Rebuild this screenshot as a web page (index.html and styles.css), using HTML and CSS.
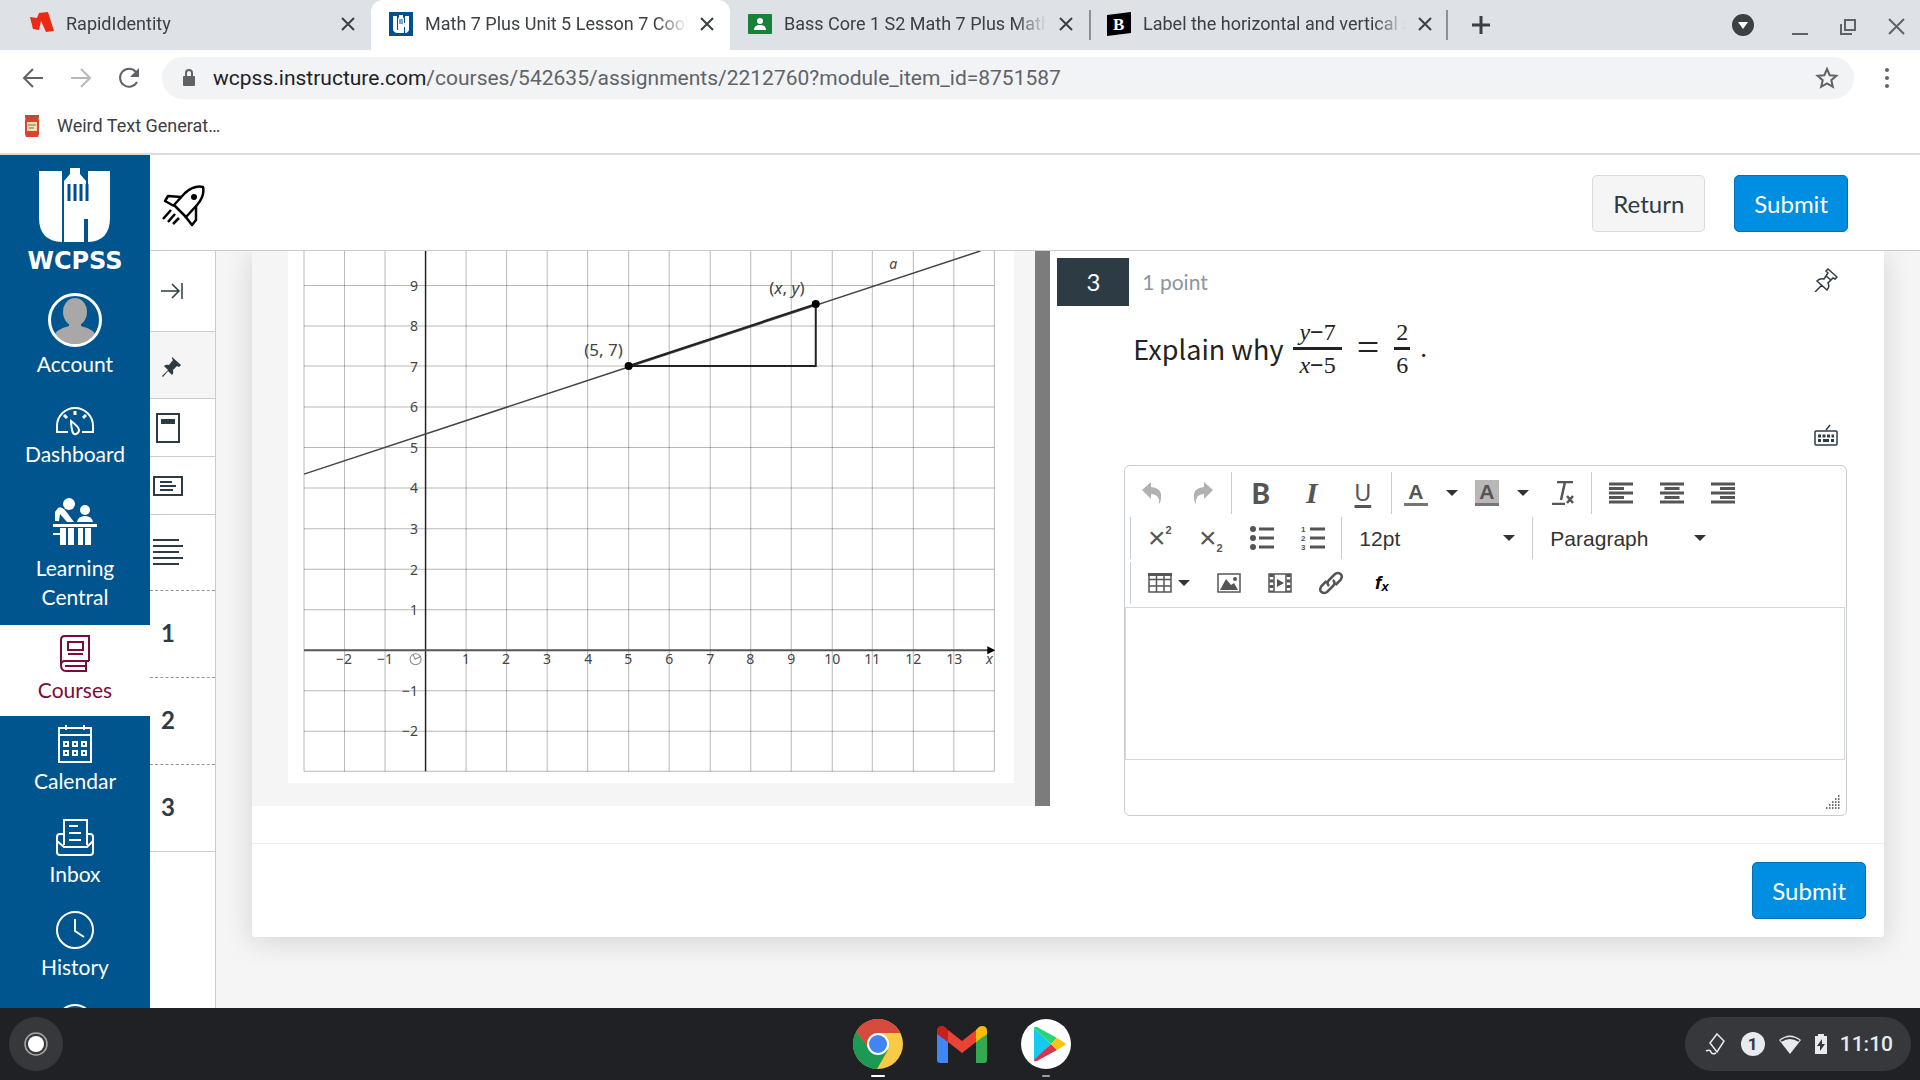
FILE: index.html
```
<!DOCTYPE html>
<html lang="en">
<head>
<meta charset="UTF-8">
<meta name="viewport" content="width=device-width, initial-scale=1.0">
<title>Math 7 Plus Unit 5 Lesson 7 Cool Down</title>
<link rel="stylesheet" href="styles.css">
</head>
<body>

<!-- Browser tabs -->
<div class="tab-strip">
    <div class="tab">
        <svg class="favicon" viewBox="0 0 24 24"><path d="M0 5l7 1 2-5 9-1 6 19-8 1-5-11-2 9-6-1z" fill="#ea2a12"/></svg>
        <span class="tab-title">RapidIdentity</span>
        <button class="tab-close" aria-label="Close tab"><svg viewBox="0 0 14 14"><path d="M1 1l12 12M13 1L1 13"/></svg></button>
    </div>
    <div class="tab active">
        <svg class="favicon" viewBox="0 0 24 24"><path d="M0 0h24v24H0z" fill="#00508f"/><path d="M4 4h4v14h1V7l1-2V3h4v2l1 2v4h1V4h4v14q-1 3-4 3v-6h-1v6H8q-4-1-4-4z" fill="#fff"/><path d="M11 7v5M13 7v5" stroke="#00508f"/></svg>
        <span class="tab-title">Math 7 Plus Unit 5 Lesson 7 Cool</span>
        <button class="tab-close" aria-label="Close tab"><svg viewBox="0 0 14 14"><path d="M1 1l12 12M13 1L1 13"/></svg></button>
    </div>
    <div class="tab">
        <svg class="favicon" viewBox="0 0 24 24"><rect y="2" width="24" height="20" rx="1" fill="#188038"/><circle cx="12" cy="9" r="3" fill="#fff"/><path d="M6 18q0-5 6-5t6 5z" fill="#fff"/></svg>
        <span class="tab-title">Bass Core 1 S2 Math 7 Plus Math</span>
        <button class="tab-close" aria-label="Close tab"><svg viewBox="0 0 14 14"><path d="M1 1l12 12M13 1L1 13"/></svg></button>
    </div>
    <div class="tab divided">
        <svg class="favicon" viewBox="0 0 24 24"><path d="M0 3l24-3v21L0 24z" fill="#000"/><text x="6" y="18" class="favicon-letter">B</text></svg>
        <span class="tab-title">Label the horizontal and vertical s</span>
        <button class="tab-close" aria-label="Close tab"><svg viewBox="0 0 14 14"><path d="M1 1l12 12M13 1L1 13"/></svg></button>
    </div>
    <button class="new-tab" aria-label="New tab"><svg viewBox="0 0 18 18"><path d="M9 0v18M0 9h18"/></svg></button>
    <div class="window-buttons">
        <button aria-label="Search tabs"><svg viewBox="0 0 24 24"><circle cx="12" cy="12" r="11" fill="#3c4043"/><path d="M7 9h10l-5 7z" fill="#fff"/></svg></button>
        <button aria-label="Minimize"><svg viewBox="0 0 24 24"><path d="M4 21h16" class="line"/></svg></button>
        <button aria-label="Restore"><svg viewBox="0 0 24 24"><path d="M9 7h10v10H9zM5 11v10h11" class="line"/></svg></button>
        <button aria-label="Close"><svg viewBox="0 0 24 24"><path d="M5 6l15 15M20 6L5 21" class="line"/></svg></button>
    </div>
</div>

<!-- Address bar -->
<div class="toolbar">
    <button class="nav-button" aria-label="Back"><svg viewBox="0 0 24 24"><path d="M22 12H3M12 3l-9 9 9 9"/></svg></button>
    <button class="nav-button disabled" aria-label="Forward"><svg viewBox="0 0 24 24"><path d="M2 12h19M12 3l9 9-9 9"/></svg></button>
    <button class="nav-button" aria-label="Reload"><svg viewBox="0 0 24 24"><path d="M20 16a9 9 0 1 1-1-10"/><path d="M22 2v9h-9z" fill="#5f6368" stroke="none"/></svg></button>
    <div class="omnibox">
        <svg class="lock" viewBox="0 0 14 18"><rect x="1" y="7" width="12" height="10" rx="1" fill="#5f6368"/><path d="M4 7V4a3 3 0 0 1 6 0v3" fill="none" stroke="#5f6368" stroke-width="2"/></svg>
        <span class="url"><b>wcpss.instructure.com</b>/courses/542635/assignments/2212760?module_item_id=8751587</span>
        <button class="star" aria-label="Bookmark this tab"><svg viewBox="0 0 24 24"><path d="M12 3l2.700 6.200 6.700.6-5.100 4.400 1.500 6.600-5.800-3.500-5.800 3.500 1.500-6.600-5.100-4.400 6.700-.6z"/></svg></button>
    </div>
    <button class="menu" aria-label="Menu"><svg viewBox="0 0 24 24"><circle cx="12" cy="4" r="2"/><circle cx="12" cy="12" r="2"/><circle cx="12" cy="20" r="2"/></svg></button>
</div>

<div class="bookmarks">
    <a class="bookmark" href="#">
        <svg viewBox="0 0 16 24"><path d="M2 3h12l1 3v14l-1 3H2l-1-3V6z" fill="#d9432f"/><path d="M1 1h14v3H1z" fill="#a8563c"/><rect x="3" y="8" width="10" height="9" fill="#f4e3b4"/><path d="M4 11h8M5 14h5" stroke="#7d6648"/></svg>
        <span>Weird Text Generat…</span>
    </a>
</div>

<div class="page">
    <!-- Global navigation -->
    <nav class="global-nav">
        <a class="logo" href="#" aria-label="WCPSS">
            <svg viewBox="0 0 96 104">
                <path d="M12 4h23v71Q12 74 12 51zM37 75V14l6-7V1h10v6l6 7v20h2V4h22v47q0 23-22 24V52h-4v23z" fill="#fff"/>
                <path d="M42 17v17M48 17v17M54 17v17M60 17v17" stroke="#00508f" stroke-width="3"/>
                <text x="48" y="102" class="logo-text">WCPSS</text>
            </svg>
        </a>
        <a class="nav-item account" href="#">
            <svg viewBox="0 0 54 54"><clipPath id="face"><circle cx="27" cy="27" r="24"/></clipPath><g clip-path="url(#face)" fill="#a9a7a7"><ellipse cx="27" cy="19" rx="12" ry="14"/><path d="M21 28h12v5q14 3 17 13v8H4v-8q3-10 17-13z"/></g><circle cx="27" cy="27" r="25.500" fill="none" stroke="#fff" stroke-width="3"/></svg>
            <span>Account</span>
        </a>
        <a class="nav-item" href="#">
            <svg viewBox="0 0 40 40"><g class="stroke"><path d="M13 35H2v-6a18 18 0 0 1 36 0v6H27"/><path d="M16 24q8 6 8 9t-3 4-4-4-1-9z"/></g><path d="M9 18l3 3M31 18l-3 3M20 14v4" stroke="currentColor" stroke-width="3"/></svg>
            <span>Dashboard</span>
        </a>
        <a class="nav-item learning" href="#">
            <svg viewBox="0 0 44 61"><g fill="currentColor"><ellipse cx="16" cy="14" rx="6" ry="6"/><circle cx="32" cy="20" r="5"/><path d="M24 32q1-6 8-6t8 6zM5 18q3-2 7 2l9 12h-7L7 24l-1 7H2V22z"/><path d="M0 34h44v3H0zM7 38h6v17H7zM15 38h6v17h-6zM25 38h5v17h-5zM32 38h6v17h-6zM0 43h8v2H0z"/></g></svg>
            <span>Learning Central</span>
        </a>
        <a class="nav-item current" href="#">
            <svg viewBox="0 0 40 40"><g class="stroke"><path d="M34 28V3H10q-4 0-4 4v25q0 6 5 6h21M34 28H10q-4 0-4 4M31 28v10M13 9h15v8H13zM13 21h15M10 33h21"/></g></svg>
            <span>Courses</span>
        </a>
        <a class="nav-item" href="#">
            <svg viewBox="0 0 40 40"><g class="stroke"><path d="M4 4h32v34H4zM4 11h32M11 1v5M29 1v5"/><path d="M9 18h4v4H9zM18 18h4v4h-4zM27 18h4v4h-4zM9 27h4v4H9zM18 27h4v4h-4zM27 27h4v4h-4z"/></g></svg>
            <span>Calendar</span>
        </a>
        <a class="nav-item" href="#">
            <svg viewBox="0 0 40 40"><g class="stroke"><path d="M9 28V3h23v25M9 17H5q-3 0-3 3v15q0 3 3 3h30q3 0 3-3V20q0-3-3-3h-3M2 24l7 6h23l6-6M14 9h9M14 16h12M14 23h12"/></g></svg>
            <span>Inbox</span>
        </a>
        <a class="nav-item" href="#">
            <svg viewBox="0 0 40 40"><g class="stroke"><circle cx="20" cy="20" r="18"/><path d="M20 9v12l9 6"/></g></svg>
            <span>History</span>
        </a>
        <a class="nav-item" href="#" aria-label="Help">
            <svg viewBox="0 0 40 40"><g class="stroke"><circle cx="20" cy="20" r="18"/></g></svg>
        </a>
    </nav>

    <div class="main">
        <header class="assignment-header">
            <svg class="rocket" viewBox="0 0 44 44"><g fill="none" stroke="#000" stroke-width="2.500" stroke-linejoin="round"><path d="M12 21L23 9Q32 1 41 3q2 9-6 18L24 33z"/><path d="M19 13L6 12l-3 5 9 5M34 22v14l-4 5-7-9"/><path d="M9 26l-8 9M13 30l-7 8M17 34l-6 6"/></g><circle cx="32" cy="13" r="3"/></svg>
            <div class="header-actions">
                <button class="btn">Return</button>
                <button class="btn primary">Submit</button>
            </div>
        </header>

        <div class="workspace">
            <!-- Question rail -->
            <aside class="rail">
                <button class="rail-toggle" aria-label="Collapse"><svg viewBox="0 0 24 18"><path d="M1 9h18M12 2l7 7-7 7M22 1v16" fill="none" stroke="#2d3b45" stroke-width="1.500"/></svg></button>
                <button class="rail-pin" aria-label="Pinned"><svg viewBox="0 0 24 24"><path d="M13 3l9 8-2 2-2-1-4 4q1 3-1 5l-4-4-5 6-1-1 6-6-4-4q2-2 5-1l4-5-1-1z" fill="#2d3b45"/></svg></button>
                <button class="rail-tool" aria-label="Passage"><svg viewBox="0 0 32 32"><path d="M5 2h22v28H5z" class="rail-line"/><path d="M9 7h14v5H9z" fill="#2d3b45"/></svg></button>
                <button class="rail-tool" aria-label="Text block"><svg viewBox="0 0 32 32"><path d="M2 7h28v18H2zM8 12h12M8 16h16M8 20h13" class="rail-line"/></svg></button>
                <button class="rail-list" aria-label="Question list"><svg viewBox="0 0 32 32"><path d="M1 3h26M1 9h30M1 15h26M1 21h30M1 27h26" class="rail-line"/></svg></button>
                <a class="rail-number" href="#">1</a>
                <a class="rail-number" href="#">2</a>
                <a class="rail-number last" href="#">3</a>
            </aside>

            <main class="content">
                <section class="card">
                    <div class="split">
                        <div class="stimulus">
                            <svg class="graph" viewBox="288 251 726 532">
                                <path d="M288 251h726v532H288z" fill="#fff"/>
                                <g class="grid">
                                    <path d="M304 251V771M344.500 251V771M385 251V771M466 251V771M506.500 251V771M547 251V771M587.500 251V771M628.500 251V771M669 251V771M710 251V771M750.500 251V771M791 251V771M832 251V771M872 251V771M913 251V771M953.500 251V771M994 251V771"/>
                                    <path d="M304 285.500H994M304 326H994M304 366H994M304 407H994M304 447.500H994M304 488H994M304 528.500H994M304 569H994M304 609.500H994M304 690.500H994M304 731H994M304 771H994"/>
                                </g>
                                <g fill="none" stroke="#222">
                                    <path d="M425.500 251V771" stroke-width="1.500"/>
                                    <path d="M304 650H990" stroke="#555" stroke-width="2"/>
                                    <path d="M304 474L980 251" stroke="#444" stroke-width="1.500"/>
                                    <path d="M628.500 366L815.500 304V366z" stroke-width="2"/>
                                </g>
                                <path d="M987 646l8 4-8 4z"/>
                                <circle cx="628.500" cy="366" r="4"/>
                                <circle cx="815.500" cy="304" r="4"/>
                                <g class="tick">
                                    <text x="344" y="664">−2</text><text x="385" y="664">−1</text>
                                    <text x="466" y="664">1</text><text x="506" y="664">2</text><text x="547" y="664">3</text>
                                    <text x="588" y="664">4</text><text x="628" y="664">5</text><text x="669" y="664">6</text>
                                    <text x="710" y="664">7</text><text x="750" y="664">8</text><text x="791" y="664">9</text>
                                    <text x="832" y="664">10</text><text x="872" y="664">11</text><text x="913" y="664">12</text>
                                    <text x="954" y="664">13</text>
                                </g>
                                <g class="tick end">
                                    <text x="418" y="291">9</text><text x="418" y="331">8</text><text x="418" y="372">7</text>
                                    <text x="418" y="412">6</text><text x="418" y="453">5</text><text x="418" y="493">4</text>
                                    <text x="418" y="534">3</text><text x="418" y="575">2</text><text x="418" y="615">1</text>
                                    <text x="418" y="696">−1</text><text x="418" y="736">−2</text>
                                </g>
                                <g fill="none" stroke="#888"><circle cx="415.500" cy="659" r="5.500"/><path d="M413 654l2 5 6-3"/></g>
                                <g class="point">
                                    <text x="584" y="356">(5, 7)</text>
                                    <text x="769" y="294">(<tspan class="var">x</tspan>, <tspan class="var">y</tspan>)</text>
                                </g>
                                <g class="tick"><text x="893" y="269" class="var">a</text><text x="989" y="664" class="var">x</text></g>
                            </svg>
                        </div>
                        <div class="splitter"></div>
                        <div class="question">
                            <div class="question-head">
                                <span class="question-number">3</span>
                                <span class="points">1 point</span>
                                <button class="icon-button" aria-label="Pin question"><svg viewBox="0 0 24 24"><path d="M14 1l9 8-2 2-2-1-5 5q2 4-1 7L3 13q3-3 7-2l4-6-2-2zM8 17l-7 7M12 8l5 4" fill="none" stroke="#2d3b45" stroke-width="1.500"/></svg></button>
                            </div>
                            <div class="prompt">
                                <span>Explain why</span>
                                <span class="fraction"><span class="top"><i>y</i><b>−</b>7</span><span><i>x</i><b>−</b>5</span></span>
                                <span class="equals">=</span>
                                <span class="fraction narrow"><span class="top">2</span><span>6</span></span>
                                <span class="dot">.</span>
                            </div>
                            <div class="keyboard-row">
                                <button class="icon-button" aria-label="Keyboard shortcuts"><svg viewBox="0 0 24 24"><rect x="1" y="8" width="22" height="14" rx="1" fill="none" stroke="#2d3b45" stroke-width="1.500"/><path d="M12 7l4-5" stroke="#2d3b45" stroke-width="1.500"/><path d="M4 13h16" stroke="#2d3b45" stroke-width="3" stroke-dasharray="3 1.500"/><path d="M4 17.500h3M9 17.500h6M17 17.500h3" stroke="#2d3b45" stroke-width="3"/></svg></button>
                            </div>

                            <!-- Rich text editor -->
                            <div class="editor">
                                <div class="editor-toolbar">
                                    <div class="tool-row">
                                        <div class="group first">
                                            <button class="tool faded" aria-label="Undo"><svg viewBox="0 0 24 24"><path d="M2 9l9-8v5q11 1 10 10 0 5-2 7 1-10-8-10v5z"/></svg></button>
                                            <button class="tool faded" aria-label="Redo"><svg viewBox="0 0 24 24"><path d="M22 9l-9-8v5Q2 7 3 16q0 5 2 7-1-10 8-10v5z"/></svg></button>
                                        </div>
                                        <div class="group">
                                            <button class="tool bold">B</button>
                                            <button class="tool italic">I</button>
                                            <button class="tool underline">U</button>
                                        </div>
                                        <div class="group">
                                            <button class="tool split-tool" aria-label="Text color"><span class="color-letter">A</span><svg class="caret" viewBox="0 0 12 6"><path d="M0 0h12L6 6z"/></svg></button>
                                            <button class="tool split-tool" aria-label="Background color"><span class="color-letter filled">A</span><svg class="caret" viewBox="0 0 12 6"><path d="M0 0h12L6 6z"/></svg></button>
                                            <button class="tool" aria-label="Clear formatting"><svg viewBox="0 0 24 24"><path d="M6 1h16M14 1l-4 18M1 23h13M16 15l6 7M22 15l-6 7" fill="none" stroke="#555" stroke-width="2.500"/></svg></button>
                                        </div>
                                        <div class="group">
                                            <button class="tool" aria-label="Align left"><svg viewBox="0 0 24 24"><path d="M0 3h24M0 7.500h15M0 12h24M0 16.500h15M0 21h24" class="bar"/></svg></button>
                                            <button class="tool" aria-label="Align center"><svg viewBox="0 0 24 24"><path d="M0 3h24M4.500 7.500h15M0 12h24M4.500 16.500h15M0 21h24" class="bar"/></svg></button>
                                            <button class="tool" aria-label="Align right"><svg viewBox="0 0 24 24"><path d="M0 3h24M9 7.500h15M0 12h24M9 16.500h15M0 21h24" class="bar"/></svg></button>
                                        </div>
                                    </div>
                                    <div class="tool-row">
                                        <div class="group">
                                            <button class="tool script" aria-label="Superscript">×<sup>2</sup></button>
                                            <button class="tool script" aria-label="Subscript">×<sub>2</sub></button>
                                            <button class="tool" aria-label="Bullet list"><svg viewBox="0 0 24 24"><circle cx="3" cy="3" r="3"/><circle cx="3" cy="12" r="3"/><circle cx="3" cy="21" r="3"/><path d="M9 3h15M9 12h15M9 21h15" class="bar"/></svg></button>
                                            <button class="tool" aria-label="Numbered list"><svg viewBox="0 0 24 24"><text x="0" y="6" class="digit">1</text><text x="0" y="15" class="digit">2</text><text x="0" y="24" class="digit">3</text><path d="M9 3h15M9 12h15M9 21h15" class="bar"/></svg></button>
                                        </div>
                                        <div class="group">
                                            <div class="picker">
                                                <select aria-label="Font size"><option>12pt</option></select>
                                                <svg class="caret" viewBox="0 0 12 6"><path d="M0 0h12L6 6z"/></svg>
                                            </div>
                                        </div>
                                        <div class="group">
                                            <div class="picker">
                                                <select aria-label="Block format"><option>Paragraph</option></select>
                                                <svg class="caret" viewBox="0 0 12 6"><path d="M0 0h12L6 6z"/></svg>
                                            </div>
                                        </div>
                                    </div>
                                    <div class="tool-row">
                                        <div class="group">
                                            <button class="tool table-tool" aria-label="Table"><svg viewBox="0 0 24 24"><path d="M1 3h22v18H1zM1 8.500h22M1 15h22M8.500 3v18M16 3v18" fill="none" stroke="#555" stroke-width="1.500"/><path d="M0 2h24v3H0z"/></svg><svg class="caret" viewBox="0 0 12 6"><path d="M0 0h12L6 6z"/></svg></button>
                                            <button class="tool" aria-label="Image"><svg viewBox="0 0 24 24"><path d="M1 3h22v18H1z" fill="none" stroke="#555" stroke-width="1.500"/><path d="M3 19l6-11 5 6 3-2 4 7z"/><circle cx="18" cy="8" r="2"/></svg></button>
                                            <button class="tool" aria-label="Media"><svg viewBox="0 0 24 24"><path d="M1 3h22v18H1zM6 3v18M18 3v18" fill="none" stroke="#555" stroke-width="1.500"/><path d="M9 8l7 4-7 4z"/><path d="M3.500 3v18M20.500 3v18" stroke="#555" stroke-width="4" stroke-dasharray="3 2.500"/></svg></button>
                                            <button class="tool" aria-label="Link"><svg viewBox="0 0 24 24"><path d="M10 15q-3-3 0-6l6-6q3-2 5.500 0t0 6l-5 5M14 9q3 3 0 6l-6 6q-3 2-5.500 0t0-6l5-5" fill="none" stroke="#555" stroke-width="2.500"/></svg></button>
                                            <button class="tool formula" aria-label="Equation"><span>f<sub>x</sub></span></button>
                                        </div>
                                    </div>
                                </div>
                                <textarea class="answer" aria-label="Answer"></textarea>
                                <div class="status-bar"><svg viewBox="0 0 15 15"><path d="M0 14h15M3 11h12M6 8h9M9 5h6M12 2h3" stroke="#444" stroke-width="1.500" stroke-dasharray="1.500 1.500"/></svg></div>
                            </div>
                        </div>
                    </div>
                    <footer class="card-footer">
                        <button class="btn primary">Submit</button>
                    </footer>
                </section>
            </main>
        </div>
    </div>
</div>

<!-- Shelf -->
<div class="shelf">
    <button class="launcher" aria-label="Launcher"><svg viewBox="0 0 24 24"><circle cx="12" cy="12" r="11" fill="none" stroke="#a5a6a8" stroke-width="1.500"/><circle cx="12" cy="12" r="8" fill="#fff"/></svg></button>
    <div class="apps">
        <button class="app running focused" aria-label="Chrome">
            <svg viewBox="0 0 50 50"><circle cx="25" cy="25" r="25" fill="#f9ca45"/><path d="M3.300 12.500A25 25 0 0 1 47.500 14H25l-9.500 16.500z" fill="#d64b3e"/><path d="M3.300 12.500A25 25 0 0 0 24 50l11-19-19-1z" fill="#1c9a55"/><circle cx="25" cy="25" r="11" fill="#fff"/><circle cx="25" cy="25" r="9" fill="#4284f4"/></svg>
        </button>
        <button class="app" aria-label="Gmail">
            <svg viewBox="0 0 50 50"><path d="M0 11l11 9v24H3q-3 0-3-3z" fill="#4285f4"/><path d="M39 20l11-9v30q0 3-3 3h-8z" fill="#34a853"/><path d="M11 11l14 11 14-11v12L25 34 11 23z" fill="#ea4335"/><path d="M0 12q0-5 5-5 3 0 6 4v12L0 15z" fill="#c5221f"/><path d="M50 12q0-5-5-5-3 0-6 4v12l11-8z" fill="#fbbc04"/></svg>
        </button>
        <button class="app running" aria-label="Play Store">
            <svg viewBox="0 0 50 50"><circle cx="25" cy="25" r="25" fill="#fff"/><path d="M13 9v33l17-17z" fill="#14cbed"/><path d="M13 9q0-2 3-1l20 11-6 6z" fill="#26d576"/><path d="M13 41q0 2 3 1l20-11-6-6z" fill="#dc3350"/><path d="M36 19l8 5q1 1 0 2l-8 5-6-6z" fill="#fcc40f"/></svg>
        </button>
    </div>
    <button class="tray">
        <svg viewBox="0 0 24 24"><path d="M13 2l7 7-7 11-7-9zM2 19q4-2 5 1t5 1" fill="none" stroke="#e8eaed" stroke-width="1.500"/></svg>
        <span class="count">1</span>
        <svg viewBox="0 0 24 24"><path d="M1 8Q12-1 23 8L12 22z" fill="#e8eaed"/><path d="M3 9q9-6 18 0" fill="none" stroke="#37383b" stroke-width="2"/></svg>
        <svg class="battery" viewBox="0 0 12 24"><path d="M3 2h6v2h3v18H0V4h3z" fill="#e8eaed"/><path d="M7 7l-5 7h3v5l5-7H7z" fill="#37383b"/></svg>
        <span class="clock">11:10</span>
    </button>
</div>

</body>
</html>
```
FILE: styles.css
```
* {
    box-sizing: border-box;
}

body {
    margin: 0;
    height: 100vh;
    display: flex;
    flex-direction: column;
    overflow: hidden;
    background-color: #fff;
    color: #2d3b45;
    font-family: Lato, "Open Sans", sans-serif;
    font-size: 21px;
}

button {
    margin: 0;
    padding: 0;
    border: none;
    background-color: transparent;
    color: inherit;
    font: inherit;
    cursor: pointer;
}

a {
    color: inherit;
    text-decoration: none;
}

svg {
    display: block;
    flex-shrink: 0;
}

/* Browser tabs */
.tab-strip {
    display: flex;
    align-items: center;
    height: 50px;
    flex-shrink: 0;
    padding-left: 12px;
    background-color: #dee1e6;
    color: #3c4043;
    font-family: Roboto, sans-serif;
    font-size: 18px;
}

.tab {
    display: flex;
    align-items: center;
    gap: 12px;
    flex: 0 1 359px;
    min-width: 0;
    height: 50px;
    padding: 0 16px 3px 18px;
    position: relative;
}

.tab.active {
    background-color: #fff;
    border-radius: 12px 12px 0 0;
}

.tab.divided::before,
.tab.divided::after {
    content: "";
    position: absolute;
    top: 10px;
    left: 0;
    width: 2px;
    height: 30px;
    background-color: #8d9094;
}

.tab.divided::after {
    left: auto;
    right: 0;
}

.favicon {
    width: 24px;
    height: 24px;
}

.favicon-letter {
    font: bold 17px "Liberation Serif", serif;
    fill: #fff;
}

.tab-title {
    flex: 1;
    overflow: hidden;
    white-space: nowrap;
    -webkit-mask-image: linear-gradient(to right, #000 88%, transparent);
    mask-image: linear-gradient(to right, #000 88%, transparent);
}

.tab-close svg {
    width: 14px;
    height: 14px;
    stroke: #3c4043;
    stroke-width: 2;
}

.new-tab {
    margin-left: 24px;
}

.new-tab svg {
    width: 18px;
    height: 18px;
    stroke: #3c4043;
    stroke-width: 3;
}

.window-buttons {
    display: flex;
    gap: 24px;
    margin-left: auto;
    padding-right: 12px;
}

.window-buttons button:first-child {
    margin-right: 9px;
}

.window-buttons svg {
    width: 24px;
    height: 24px;
}

.window-buttons .line {
    fill: none;
    stroke: #5f6368;
    stroke-width: 2;
}

/* Address bar */
.toolbar {
    display: flex;
    align-items: center;
    height: 54px;
    flex-shrink: 0;
    padding: 1px 21px 0;
    font-family: Roboto, sans-serif;
    font-size: 21px;
}

.nav-button {
    margin-right: 24px;
}

.nav-button svg,
.star svg,
.menu svg {
    width: 24px;
    height: 24px;
    fill: none;
    stroke: #5f6368;
    stroke-width: 2;
}

.nav-button.disabled {
    opacity: 0.45;
}

.omnibox {
    display: flex;
    align-items: center;
    flex: 1;
    height: 42px;
    margin: 0 21px 0 -3px;
    padding: 0 15px 0 20px;
    border-radius: 21px;
    background-color: #f1f3f4;
}

.lock {
    width: 14px;
    height: 18px;
}

.url {
    flex: 1;
    margin-left: 17px;
    color: #5f6368;
}

.url b {
    color: #202124;
    font-weight: 400;
}

.menu svg {
    fill: #5f6368;
    stroke: none;
}

.bookmarks {
    display: flex;
    align-items: center;
    height: 51px;
    flex-shrink: 0;
    padding: 0 24px 6px;
    border-bottom: 2px solid #dadce0;
    color: #3c4043;
    font-family: Roboto, sans-serif;
    font-size: 18px;
}

.bookmark {
    display: flex;
    align-items: center;
    gap: 17px;
}

.bookmark svg {
    width: 16px;
    height: 24px;
}

.page {
    display: flex;
    flex: 1;
    min-height: 0;
}

/* Global navigation */
.global-nav {
    width: 150px;
    flex-shrink: 0;
    overflow: hidden;
    background-color: #00558f;
    color: #fff;
    text-align: center;
    line-height: 29px;
}

.logo {
    display: flex;
    justify-content: center;
    padding: 12px 0 14px;
}

.logo svg {
    width: 96px;
    height: 104px;
    overflow: visible;
}

.logo-text {
    font: bold 24px "DejaVu Sans", sans-serif;
    fill: #fff;
    text-anchor: middle;
}

.nav-item {
    display: flex;
    flex-direction: column;
    align-items: center;
    gap: 2px;
    padding: 8px 20px 14px;
}

.nav-item svg {
    width: 40px;
    height: 40px;
}

.nav-item.account svg {
    width: 54px;
    height: 54px;
}

.nav-item.account {
    padding-bottom: 11px;
}

.nav-item.learning svg {
    width: 44px;
    height: 61px;
}

.nav-item.current {
    padding-bottom: 12px;
    background-color: #fff;
    color: #7b0b3c;
}

.stroke {
    fill: none;
    stroke: currentColor;
    stroke-width: 2;
}

.main {
    display: flex;
    flex-direction: column;
    flex: 1;
    min-width: 0;
}

.assignment-header {
    display: flex;
    align-items: center;
    justify-content: space-between;
    height: 96px;
    flex-shrink: 0;
    padding: 2px 72px 0 12px;
    border-bottom: 1px solid #c7cdd1;
}

.rocket {
    width: 44px;
    height: 44px;
    margin-top: 4px;
}

.header-actions {
    display: flex;
    gap: 29px;
}

.btn {
    height: 57px;
    padding: 0 20px;
    border: 1px solid #d8dadc;
    border-radius: 5px;
    background-color: #f5f5f5;
    font-size: 24px;
}

.btn.primary {
    padding: 0 19px;
    border-color: #0770b5;
    background-color: #008ee2;
    color: #fff;
}

.workspace {
    display: flex;
    flex: 1;
    min-height: 0;
}

/* Question rail */
.rail {
    display: flex;
    flex-direction: column;
    width: 66px;
    flex-shrink: 0;
    border-right: 1px solid #c7cdd1;
}

.rail > * {
    display: flex;
    align-items: center;
    padding-left: 2px;
    border-bottom: 1px solid #c7cdd1;
}

.rail .rail-toggle {
    height: 81px;
    padding-left: 10px;
}

.rail-toggle svg {
    width: 24px;
    height: 18px;
}

.rail .rail-pin {
    height: 67px;
    padding-top: 2px;
    padding-left: 9px;
    background-color: #f5f5f5;
}

.rail-pin svg {
    width: 24px;
    height: 24px;
}

.rail-tool {
    height: 58px;
}

.rail-tool svg,
.rail-list svg {
    width: 32px;
    height: 32px;
}

.rail .rail-list {
    height: 76px;
    border-bottom: 1px dashed #8b969e;
}

.rail .rail-number {
    height: 87px;
    padding-bottom: 4px;
    padding-left: 11px;
    border-bottom: 1px dashed #8b969e;
    font-size: 24px;
    font-weight: 700;
}

.rail .rail-number.last {
    border-bottom: 1px solid #c7cdd1;
}

.rail-line {
    fill: none;
    stroke: #2d3b45;
    stroke-width: 2;
}

/* Assignment card */
.content {
    flex: 1;
    min-width: 0;
    padding: 0 36px;
    overflow: hidden;
    background-color: #f5f5f5;
}

.card {
    border-radius: 0 0 3px 3px;
    background-color: #fff;
    box-shadow: 0 4px 30px rgba(0, 0, 0, 0.14);
}

.split {
    display: flex;
    align-items: flex-start;
    padding-bottom: 27px;
}

.stimulus {
    flex: 0 0 48%;
    padding: 0 21px 23px 36px;
    background-color: #f5f5f5;
}

.graph {
    width: 100%;
}

.grid {
    fill: none;
    stroke: #000;
    stroke-opacity: 0.28;
    stroke-width: 1;
}

.tick {
    fill: #444;
    font: 14px "Noto Sans", sans-serif;
    text-anchor: middle;
}

.tick.end {
    text-anchor: end;
}

.point {
    fill: #444;
    font: 17px "Noto Sans", sans-serif;
}

.var {
    font-style: italic;
}

.splitter {
    align-self: stretch;
    width: 15px;
    margin-bottom: 10px;
    background-color: #7c7c7c;
}

.question {
    flex: 1;
    min-width: 0;
    padding: 7px 37px 0 7px;
}

.question-head {
    display: flex;
    align-items: center;
    margin-bottom: 4px;
}

.question-number {
    width: 72px;
    background-color: #2d3b45;
    color: #fff;
    font-size: 24px;
    line-height: 48px;
    text-align: center;
}

.points {
    flex: 1;
    padding: 0 0 2px 13px;
    color: #8b969e;
}

.icon-button {
    margin-right: 9px;
    padding-bottom: 5px;
}

.icon-button svg {
    width: 24px;
    height: 24px;
}

.prompt {
    display: flex;
    align-items: center;
    gap: 10px;
    height: 76px;
    padding-left: 76px;
    color: #222;
    font-family: "Noto Sans CJK SC", sans-serif;
    font-size: 27px;
}

.fraction,
.equals,
.dot {
    font-family: "Liberation Serif", serif;
    line-height: 30px;
}

.fraction {
    display: flex;
    flex-direction: column;
    font-size: 24px;
    text-align: center;
}

.fraction > span {
    padding: 0 6px;
}

.fraction.narrow > span {
    padding: 0 2px;
}

.fraction .top {
    border-bottom: 3px solid #222;
}

.equals {
    padding: 0 5px;
    font-size: 40px;
}

.keyboard-row {
    display: flex;
    justify-content: flex-end;
    padding: 37px 0 13px;
}

/* Rich text editor */
.editor {
    margin-left: 67px;
    border: 1px solid #c7cdd1;
    border-radius: 6px;
    color: #333;
    font-family: "Liberation Sans", Arial, sans-serif;
    font-size: 21px;
}

.editor-toolbar {
    padding: 5px 0 1px 2px;
}

.tool-row {
    display: flex;
    height: 45px;
}

.group {
    display: flex;
    height: 42px;
    margin: 1px 0;
    padding: 0 3px;
    border-left: 1px solid #c7cdd1;
}

.group:first-child {
    margin-left: 3px;
}

.group.first {
    margin-left: -5px;
    border-left-color: transparent;
}

.tool {
    display: flex;
    align-items: center;
    justify-content: center;
    width: 51px;
    color: #555;
}

.tool svg {
    width: 24px;
    height: 24px;
    fill: #555;
}

.tool.faded {
    opacity: 0.45;
}

.tool svg.caret,
.picker .caret {
    width: 12px;
    height: 6px;
    fill: #333;
}

.tool.bold {
    font-family: Lato, sans-serif;
    font-size: 28px;
    font-weight: 900;
}

.tool.italic {
    font-family: "Liberation Serif", serif;
    font-size: 30px;
    font-style: italic;
    font-weight: 700;
}

.tool.underline {
    font-size: 23px;
    text-decoration: underline;
    text-decoration-thickness: 3px;
    text-underline-offset: 4px;
}

.tool.split-tool {
    gap: 18px;
    width: 71px;
}

.color-letter {
    width: 24px;
    border-bottom: 3px solid #777;
    font-weight: 700;
    line-height: 23px;
}

.color-letter.filled {
    background-color: #b8b8b8;
}

.tool.script {
    font-size: 30px;
    line-height: 30px;
}

.script sup,
.script sub {
    font-size: 11px;
    font-weight: 700;
    line-height: 11px;
}

.script sup {
    margin-bottom: 16px;
}

.script sub {
    margin-top: 20px;
}

.tool.table-tool {
    gap: 6px;
    width: 69px;
}

.bar {
    stroke: #555;
    stroke-width: 3;
}

.digit {
    font: bold 8px "Liberation Sans", sans-serif;
}

.tool.formula {
    color: #000;
    font-family: "Liberation Sans", sans-serif;
    font-size: 19px;
    font-style: italic;
    font-weight: 700;
}

.formula sub {
    font-size: 13px;
    line-height: 13px;
    vertical-align: -2px;
}

.picker {
    display: flex;
    position: relative;
    width: 184px;
}

.picker select {
    width: 100%;
    padding: 0 14px;
    border: none;
    background-color: transparent;
    color: inherit;
    font: inherit;
    appearance: none;
}

.picker .caret {
    position: absolute;
    top: 18px;
    right: 14px;
    pointer-events: none;
}

.answer {
    display: block;
    width: calc(100% - 1px);
    height: 153px;
    padding: 12px;
    border: 1px solid #d5d8da;
    font: inherit;
    resize: none;
    outline: none;
}

.status-bar {
    display: flex;
    align-items: flex-end;
    justify-content: flex-end;
    height: 55px;
    padding: 0 5px 6px;
}

.status-bar svg {
    width: 15px;
    height: 15px;
}

.card-footer {
    display: flex;
    justify-content: flex-end;
    padding: 18px;
    border-top: 1px solid #f0f0f0;
}

/* Shelf */
.shelf {
    display: flex;
    align-items: center;
    justify-content: space-between;
    height: 72px;
    flex-shrink: 0;
    padding: 0 9px;
    background-color: #202124;
    color: #e8eaed;
    font-family: Roboto, sans-serif;
}

.launcher {
    display: flex;
    align-items: center;
    justify-content: center;
    width: 54px;
    height: 54px;
    margin-right: 176px;
    border-radius: 50%;
    background-color: #37383b;
}

.launcher svg {
    width: 24px;
    height: 24px;
}

.apps {
    display: flex;
    gap: 34px;
}

.app {
    position: relative;
}

.app svg {
    width: 50px;
    height: 50px;
}

.app.running::after {
    content: "";
    position: absolute;
    bottom: -8px;
    left: 50%;
    width: 8px;
    height: 2px;
    margin-left: -4px;
    border-radius: 1px;
    background-color: #9aa0a6;
}

.app.focused::after {
    width: 14px;
    margin-left: -7px;
    background-color: #fff;
}

.tray {
    display: flex;
    align-items: center;
    gap: 13px;
    height: 54px;
    padding: 0 18px 0 19px;
    border-radius: 27px;
    background-color: #37383b;
}

.tray svg {
    width: 24px;
    height: 24px;
}

.tray .battery {
    width: 12px;
}

.count {
    width: 24px;
    border-radius: 50%;
    background-color: #e8eaed;
    color: #37383b;
    font-size: 17px;
    font-weight: 700;
    line-height: 24px;
}

.clock {
    font-size: 21px;
    font-weight: 500;
}
```
